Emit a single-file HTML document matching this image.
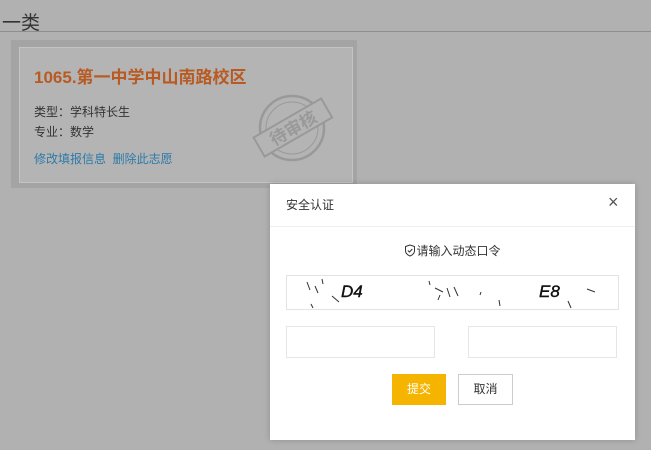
<!DOCTYPE html>
<html><head><meta charset="utf-8"><style>
body{margin:0;width:651px;height:450px;background:#b1b1b1;font-family:"Liberation Sans","Noto Sans CJK SC",sans-serif;position:relative;overflow:hidden}
.ab{position:absolute}
</style></head><body>
<div class="ab" style="left:2px;top:8px;font-size:19px;color:#333">一类</div>
<div class="ab" style="left:0;top:31px;width:651px;height:1px;background:#8e8e8e"></div>
<div class="ab" style="left:11px;top:40px;width:346px;height:148px;background:#a4a4a4"></div>
<div class="ab" style="left:19px;top:47px;width:332px;height:134px;border:1px solid #c4c4c4;background:#b4b4b4"></div>
<div class="ab" style="left:34px;top:63px;font-size:17px;font-weight:bold;color:#b85a22">1065.第一中学中山南路校区</div>
<div class="ab" style="left:34px;top:103px;font-size:12px;color:#333">类型：学科特长生</div>
<div class="ab" style="left:34px;top:123px;font-size:12px;color:#333">专业：数学</div>
<div class="ab" style="left:34px;top:150px;font-size:12px;color:#2e7aa8">修改填报信息&nbsp;&nbsp;删除此志愿</div>
<svg class="ab" style="left:252px;top:88px" width="86" height="80" viewBox="0 0 86 80">
<circle cx="40" cy="40" r="32" fill="none" stroke="#999" stroke-width="2.5"/>
<circle cx="40" cy="40" r="26" fill="none" stroke="#999" stroke-width="1"/>
<g transform="rotate(-30 40 40)"><rect x="2" y="29" width="78" height="22" fill="#b4b4b4" stroke="#999" stroke-width="2"/>
<text x="41" y="47" font-size="17" font-weight="bold" fill="#999" text-anchor="middle" font-family="Noto Sans CJK SC,sans-serif">待审核</text></g>
</svg>
<div class="ab" style="left:270px;top:184px;width:365px;height:256px;background:#fff;box-shadow:0 0 6px rgba(0,0,0,.2)">
<div class="ab" style="left:16px;top:12px;font-size:12px;color:#333">安全认证</div>
<div class="ab" style="left:338px;top:8px;font-size:18px;color:#555">×</div>
<div class="ab" style="left:0;top:42px;width:365px;height:1px;background:#eee"></div>
<div class="ab" style="left:0;top:58px;width:365px;text-align:center;font-size:12px;color:#333"><svg width="12" height="13" viewBox="0 0 12 13" style="vertical-align:-2px"><path d="M6 1L1.5 2.5V6.5C1.5 9 3.5 11 6 12C8.5 11 10.5 9 10.5 6.5V2.5Z" fill="none" stroke="#333" stroke-width="1"/><path d="M3.8 6.5L5.5 8L8.3 5" fill="none" stroke="#333" stroke-width="1"/></svg>请输入动态口令</div>
<div class="ab" style="left:16px;top:91px;width:331px;height:33px;border:1px solid #e3e3e3">
<span class="ab" style="left:54px;top:6px;font-size:17px;font-style:italic;color:#111;-webkit-text-stroke:0.4px #111">D4</span>
<span class="ab" style="left:252px;top:6px;font-size:17px;font-style:italic;color:#111;-webkit-text-stroke:0.4px #111">E8</span>
<svg class="ab" style="left:0;top:0" width="331" height="33" stroke="#333" stroke-width="1"><path d="M20 6l3 8M28 10l3 7M35 3l1 5M45 20l7 6M142 5l1 4M148 12l8 4M160 12l3 9M167 11l4 9M153 19l-2 5M194 16l-1 3M212 24l1 6M300 13l8 3M281 25l3 7M24 28l2 4"/></svg>
</div>
<div class="ab" style="left:16px;top:142px;width:147px;height:30px;border:1px solid #e6e6e6"></div>
<div class="ab" style="left:198px;top:142px;width:147px;height:30px;border:1px solid #e6e6e6"></div>
<div class="ab" style="left:122px;top:190px;width:54px;height:31px;background:#f5b400;color:#fff;font-size:12px;text-align:center;line-height:31px">提交</div>
<div class="ab" style="left:188px;top:190px;width:53px;height:29px;border:1px solid #ccc;color:#333;font-size:12px;text-align:center;line-height:29px">取消</div>
</div>
</body></html>
